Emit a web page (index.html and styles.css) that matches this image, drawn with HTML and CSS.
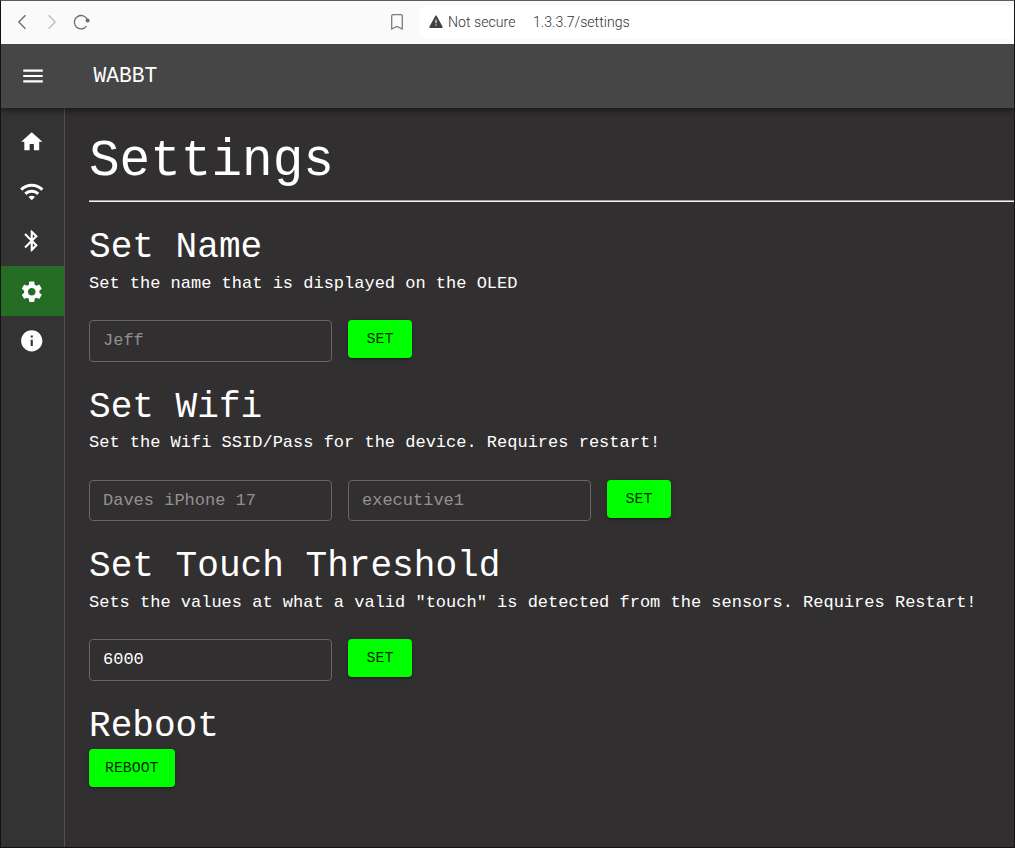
FILE: index.html
```html
<!DOCTYPE html>
<html lang="en">
<head>
<meta charset="utf-8">
<title>WABBT</title>
<link rel="stylesheet" href="styles.css">
</head>
<body>
<div class="window">
  <div class="browser">
    <svg class="nav" width="100" height="42" viewBox="1 1 100 42" fill="none" stroke="#6b6b6b" stroke-width="1.3">
      <path d="M25.5 15.2 18.8 22l6.7 6.8"/>
      <path stroke="#bdbdbd" d="M48.5 15.2 55.2 22l-6.7 6.8"/>
      <path d="M86.6 26a6.7 6.7 0 1 1 .9-5.7"/>
      <circle cx="87.6" cy="20.5" r="2" fill="#6b6b6b" stroke="none"/>
    </svg>
    <svg class="bookmark" width="14" height="18" viewBox="0 0 14 18" fill="none" stroke="#7c7c7c" stroke-width="1.3"><path d="M1.7 3q0-1.4 1.4-1.4h7.8q1.4 0 1.4 1.4v13L7 13.4 1.7 16z"/></svg>
    <div class="address">
      <svg class="warning" width="14" height="14" viewBox="0 0 14 14"><path d="M7 1.2 13 12.2H1z" fill="#404040" stroke="#404040" stroke-width="1.4" stroke-linejoin="round"/><path d="M7 4.6v3.7M7 9.4v1.4" stroke="#fff" stroke-width="1.1"/></svg>
      <span class="security">Not secure</span>
      <span class="url">1.3.3.7/settings</span>
    </div>
  </div>
  <header class="appbar">
    <svg class="menu" width="26" height="26" viewBox="0 0 24 24" fill="#fff"><path d="M3 18h18v-2H3v2zm0-5h18v-2H3v2zm0-7v2h18V6H3z"/></svg>
    <span class="brand">WABBT</span>
  </header>
  <div class="body">
    <nav class="sidebar">
      <a class="item"><svg viewBox="0 0 24 24"><path d="M10 20v-6h4v6h5v-8h3L12 3 2 12h3v8z"/></svg></a>
      <a class="item"><svg viewBox="0 0 24 24"><path d="m1 9 2 2c4.970-4.970 13.030-4.970 18 0l2-2C16.930 2.930 7.080 2.930 1 9zm8 8 3 3 3-3c-1.650-1.660-4.340-1.660-6 0zm-4-4 2 2c2.760-2.760 7.240-2.760 10 0l2-2C15.140 9.140 8.870 9.140 5 13z"/></svg></a>
      <a class="item raised"><svg viewBox="0 0 24 24"><path d="M17.710 7.710 12 2h-1v7.590L6.410 5 5 6.410 10.590 12 5 17.590 6.410 19 11 14.410V22h1l5.710-5.710-4.300-4.290 4.300-4.290zM13 5.830l1.880 1.880L13 9.590V5.830zm1.880 10.460L13 18.170v-3.760l1.880 1.880z"/></svg></a>
      <a class="item active"><svg viewBox="0 0 24 24"><path d="M19.140 12.940c.04-.3.060-.61.060-.94 0-.32-.02-.64-.07-.94l2.030-1.580c.18-.14.230-.41.120-.61l-1.920-3.320c-.12-.22-.37-.29-.59-.22l-2.390.96c-.5-.38-1.030-.7-1.620-.94l-.36-2.540c-.04-.24-.24-.41-.48-.41h-3.840c-.24 0-.43.17-.47.41l-.36 2.540c-.59.24-1.130.57-1.620.94l-2.390-.96c-.22-.08-.47 0-.59.22L2.740 8.870c-.12.210-.08.470.120.610l2.030 1.580c-.05.3-.09.630-.09.940s.02.640.070.940l-2.030 1.580c-.18.140-.23.410-.12.610l1.920 3.320c.12.220.370.290.590.220l2.390-.96c.5.380 1.030.7 1.620.940l.36 2.540c.05.240.240.410.480.410h3.840c.24 0 .44-.17.470-.41l.36-2.540c.59-.24 1.130-.56 1.620-.94l2.390.96c.22.080.470 0 .59-.22l1.920-3.320c.12-.22.070-.47-.12-.61l-2.010-1.580zM12 15.600c-1.980 0-3.600-1.620-3.600-3.600s1.620-3.600 3.600-3.600 3.600 1.620 3.600 3.600-1.620 3.600-3.600 3.600z"/></svg></a>
      <a class="item raised"><svg viewBox="0 0 24 24"><path d="M12 2C6.480 2 2 6.480 2 12s4.480 10 10 10 10-4.480 10-10S17.520 2 12 2zm1 15h-2v-6h2v6zm0-8h-2V7h2v2z"/></svg></a>
    </nav>
    <main class="content">
      <h1 class="title">Settings</h1>
      <section class="setting">
        <h2 class="heading">Set Name</h2>
        <p class="description">Set the name that is displayed on the OLED</p>
        <div class="controls"><input class="field" placeholder="Jeff"><button class="button">SET</button></div>
      </section>
      <section class="setting">
        <h2 class="heading">Set Wifi</h2>
        <p class="description">Set the Wifi SSID/Pass for the device. Requires restart!</p>
        <div class="controls"><input class="field" placeholder="Daves iPhone 17"><input class="field" placeholder="executive1"><button class="button">SET</button></div>
      </section>
      <section class="setting">
        <h2 class="heading">Set Touch Threshold</h2>
        <p class="description">Sets the values at what a valid "touch" is detected from the sensors. Requires Restart!</p>
        <div class="controls"><input class="field" value="6000"><button class="button">SET</button></div>
      </section>
      <section class="setting">
        <h2 class="heading">Reboot</h2>
        <button class="button">REBOOT</button>
      </section>
    </main>
  </div>
</div>
</body>
</html>
```
FILE: styles.css
```css
* { box-sizing: border-box; }
body { margin: 0; font-family: "Liberation Mono", monospace; color: #fff; overflow: hidden; }
.window {
  width: 1015px; height: 848px; display: flex; flex-direction: column;
  border: 1px solid #141213; border-top-color: #5c5a5c; background: #322f30; overflow: hidden;
}
.browser { height: 43px; flex: none; display: flex; align-items: center; padding-bottom: 1px; background: #fafafa; font-family: Roboto, sans-serif; font-size: 14.15px; font-weight: 300; color: #333; z-index: 2; }
.nav { flex: none; }
.bookmark { margin-left: 289px; flex: none; }
.address { margin-left: 16px; flex: 1; height: 33px; display: flex; align-items: center; background: #fff; border-radius: 6px 0 0 6px; padding-left: 9px; }
.warning { margin-right: 5px; }
.security { width: 85px; }
.appbar { height: 64px; flex: none; display: flex; align-items: center; padding-left: 18.5px; background: #464646; box-shadow: 0 2px 4px -1px rgba(0,0,0,.3), 0 4px 5px rgba(0,0,0,.2), 0 1px 10px rgba(0,0,0,.16); z-index: 1; }
.menu { margin-bottom: 1px; }
.brand { margin-left: 48px; font-size: 21.25px; line-height: 32px; }
.body { flex: 1; display: flex; min-height: 0; }
.sidebar { width: 64px; flex: none; background: #333; border-right: 1px solid #515151; padding-top: 8px; }
.item { height: 50px; display: flex; align-items: center; justify-content: center; }
.item svg { width: 25.5px; height: 25.5px; margin-right: 1.5px; margin-top: 1px; fill: #fff; }
.raised svg { margin-top: -1px; }
.active { background: #256d25; }
.content { flex: 1; min-width: 0; padding: 20px 0 0 24px; }
.title { margin: 0 0 26px; height: 73px; padding-top: 3px; border-bottom: 1px solid #a09d9e; box-shadow: 0 1px #f4f2f3; font-size: 51px; font-weight: 400; line-height: 61px; }
.setting { height: 159.5px; }
.heading { margin: 0; font-size: 36.1px; font-weight: 400; line-height: 42px; }
.description { margin: -.2px 0 22.2px; font-size: 17px; line-height: 29px; }
.controls { display: flex; align-items: flex-start; gap: 16px; }
.field { width: 243px; height: 41.5px; padding: 0 13px; border: 1px solid #676566; border-radius: 4px; background: transparent; font: 17px "Liberation Mono", monospace; color: #fff; }
.field::placeholder { color: #929091; opacity: 1; }
.button { min-width: 64px; height: 38px; padding: 0 16px; border: 0; border-radius: 4px; background: #0f0; color: rgba(0,0,0,.87); font: 14.875px/38px "Liberation Mono", monospace; box-shadow: 0 3px 1px -2px rgba(0,0,0,.2), 0 2px 2px rgba(0,0,0,.14), 0 1px 5px rgba(0,0,0,.12); }
.heading + .button { margin-top: 1px; }
```
